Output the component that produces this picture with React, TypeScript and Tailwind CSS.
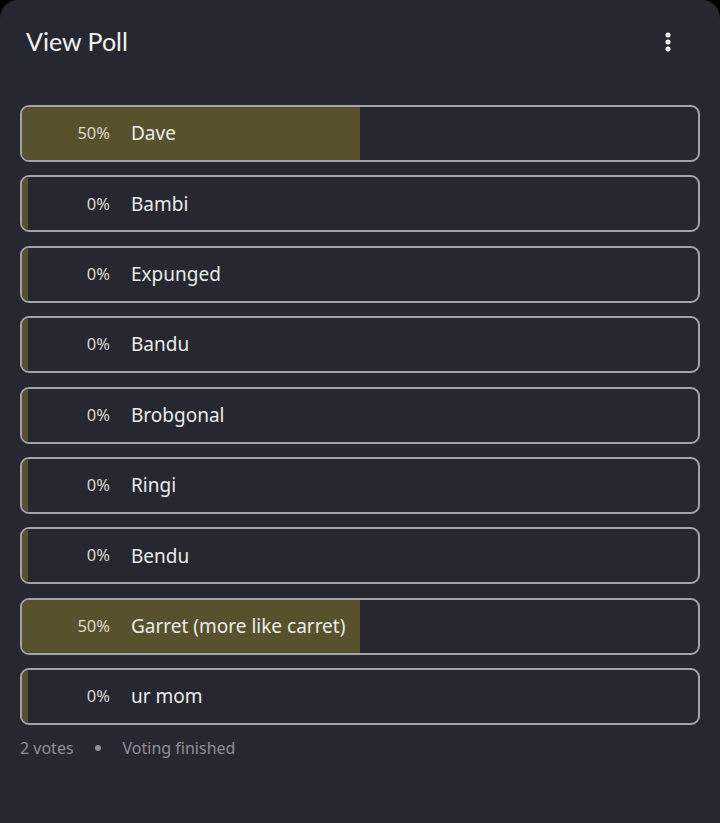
import { EllipsisVertical } from 'lucide-react';

const options = [
    { label: 'Dave', pct: 50 },
    { label: 'Bambi', pct: 0 },
    { label: 'Expunged', pct: 0 },
    { label: 'Bandu', pct: 0 },
    { label: 'Brobgonal', pct: 0 },
    { label: 'Ringi', pct: 0 },
    { label: 'Bendu', pct: 0 },
    { label: 'Garret (more like carret)', pct: 50 },
    { label: 'ur mom', pct: 0 },
];

const PollRow = ({ label, pct }: { label: string; pct: number }) => (
    <div className="relative h-[57px] rounded-[9px] border-2 border-[#a3a3ab] overflow-hidden">
        {/* fill bar */}
        <div
            className="absolute inset-y-0 left-0 bg-[#58522c] min-w-[6px]"
            style={{ width: `${pct}%` }}
        />
        <div className="relative flex items-center h-full">
            <span className="w-[88px] text-right text-[16.5px] text-[#ddd9cc]">{pct}%</span>
            <span className="ml-[21px] text-[19px] text-[#ebebeb]">{label}</span>
        </div>
    </div>
);

export default function App() {
    return (
        <div className="min-h-[823px] bg-black font-['Noto_Sans','Open_Sans',sans-serif]">
            <div className="min-h-[823px] bg-[#272731] rounded-t-[18px] px-[20px]">
                {/* header */}
                <div className="flex items-center justify-between h-[84px] pl-[6px]">
                    <h1 className="text-[25px] text-[#f2f2f2] font-['Lato',sans-serif]">View Poll</h1>
                    <EllipsisVertical className="w-6 h-6 mr-[20px] text-white" strokeWidth={3} />
                </div>

                <div className="mt-[21px] flex flex-col gap-[13.4px]">
                    {options.map((o) => (
                        <PollRow key={o.label} label={o.label} pct={o.pct} />
                    ))}
                </div>

                {/* footer */}
                <div className="flex items-center mt-[11px] text-[16px] text-[#8e8e97]">
                    <span>2 votes</span>
                    <span className="ml-[21px] w-[6px] h-[6px] rounded-full bg-[#8e8e97]" />
                    <span className="ml-[22px]">Voting finished</span>
                </div>
            </div>
        </div>
    );
}
